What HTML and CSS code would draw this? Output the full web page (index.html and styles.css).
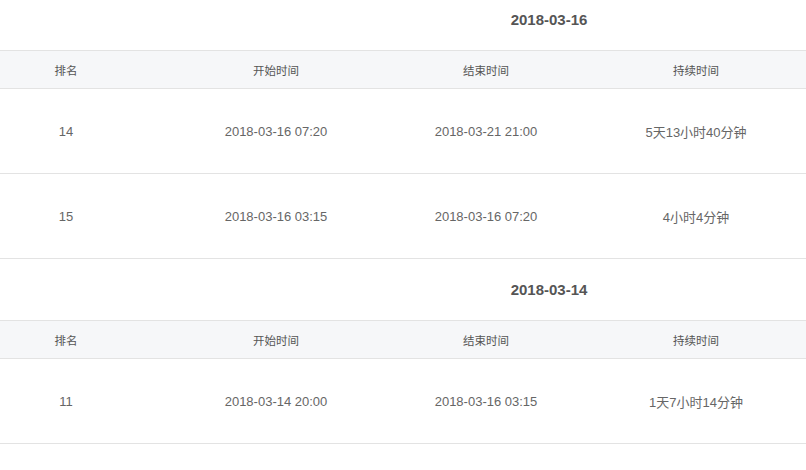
FILE: index.html
```html
<!DOCTYPE html>
<html lang="zh">
<head>
<meta charset="utf-8">
<title>排名记录</title>
<link rel="stylesheet" href="styles.css">
</head>
<body>
<div class="list">
  <section class="group">
    <h2 class="date">2018-03-16</h2>
    <div class="row head">
      <div class="cell c1">排名</div>
      <div class="cell">开始时间</div>
      <div class="cell">结束时间</div>
      <div class="cell c4">持续时间</div>
    </div>
    <div class="row">
      <div class="cell c1">14</div>
      <div class="cell">2018-03-16 07:20</div>
      <div class="cell">2018-03-21 21:00</div>
      <div class="cell c4">5天13小时40分钟</div>
    </div>
    <div class="row">
      <div class="cell c1">15</div>
      <div class="cell">2018-03-16 03:15</div>
      <div class="cell">2018-03-16 07:20</div>
      <div class="cell c4">4小时4分钟</div>
    </div>
  </section>
  <section class="group">
    <h2 class="date">2018-03-14</h2>
    <div class="row head">
      <div class="cell c1">排名</div>
      <div class="cell">开始时间</div>
      <div class="cell">结束时间</div>
      <div class="cell c4">持续时间</div>
    </div>
    <div class="row">
      <div class="cell c1">11</div>
      <div class="cell">2018-03-14 20:00</div>
      <div class="cell">2018-03-16 03:15</div>
      <div class="cell c4">1天7小时14分钟</div>
    </div>
  </section>
</div>
</body>
</html>
```

FILE: styles.css
```css
html, body {
  margin: 0;
  padding: 0;
  background: #ffffff;
}
body {
  font-family: "Liberation Sans", Arial, "Noto Sans CJK SC", sans-serif;
  color: #666666;
  overflow: hidden;
}
.list {
  margin-top: -11px;
}
.date {
  margin: 0;
  height: 61px;
  line-height: 61px;
  padding-left: 292px;
  text-align: center;
  font-size: 15px;
  font-weight: bold;
  color: #555555;
}
.row {
  display: grid;
  grid-template-columns: 171px 210px 210px 215px;
  align-items: center;
  height: 85px;
  box-sizing: border-box;
  border-bottom: 1px solid #e3e3e3;
  font-size: 13px;
}
.row.head {
  height: 39px;
  background: #f6f7f9;
  border-top: 1px solid #e3e3e3;
  font-size: 11.5px;
  color: #555555;
}
.cell {
  text-align: center;
  white-space: nowrap;
}
.c1 {
  padding-right: 39px;
}
.c4 {
  padding-right: 5px;
}
```
